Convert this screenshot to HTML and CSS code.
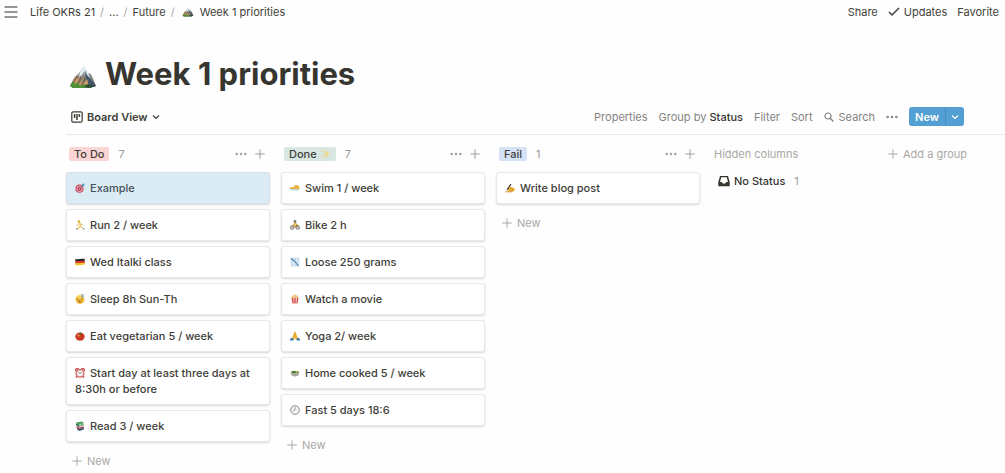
FILE: index.html
```html
<!DOCTYPE html>
<html lang="en">
<head>
<meta charset="utf-8">
<title>Week 1 priorities</title>
<link rel="stylesheet" href="styles.css">
</head>
<body>
<svg class="sprite" aria-hidden="true">
  <defs>
    <linearGradient id="rock" x1="0" y1="0" x2="0" y2="1"><stop offset="0" stop-color="#c5d9e5"/><stop offset=".45" stop-color="#8a8987"/><stop offset="1" stop-color="#4c5840"/></linearGradient>
    <linearGradient id="face" x1="0" y1="0" x2="0" y2="1"><stop offset="0" stop-color="#ffe16a"/><stop offset="1" stop-color="#eca01e"/></linearGradient>
  </defs>
  <symbol id="mountain" viewBox="0 0 28 24">
    <path d="M1 21 5 13 9 9 15 1 19 8 22 9 27 21 20 23H4z" fill="url(#rock)"/>
    <path d="m15 1-4 6-1 5 3-2 2-4 2 4 4 3-2-5z" fill="#e1eef4"/>
    <path d="m16 5 2 5 5 6 4 5-6 2-4-8z" fill="#40566a"/>
    <path d="m4 15 5-6-1 6 4-4-2 8 5-7-1 7 4-5 2 7-16 1z" fill="#c99c6a"/>
    <path d="m8 11-4 8m8-7-4 8m8-7-4 8" stroke="#5c493b" stroke-width="1" fill="none"/>
    <path d="m1 21 3-5 2 3 3-2 2 4 4-2 5 3-6 1H5z" fill="#4f9135"/>
    <path d="m15 21 4-2 7 2-6 2z" fill="#315137"/>
  </symbol>
  <symbol id="menu" viewBox="0 0 14 12"><path d="M.5 1h13M.5 6h13M.5 11h13" stroke="#777570" stroke-width="1.400"/></symbol>
  <symbol id="check" viewBox="0 0 12 10"><path d="m1 5 3 3 7-7" fill="none" stroke="currentColor" stroke-width="1.500"/></symbol>
  <symbol id="boardview" viewBox="0 0 12 12"><rect x=".8" y=".8" width="10.400" height="10.400" rx="1.500" fill="none" stroke="currentColor" stroke-width="1.200"/><path d="M3.600 3v4M6 3v6M8.400 3v3" stroke="currentColor" stroke-width="1.500"/></symbol>
  <symbol id="chevron" viewBox="0 0 8 8"><path d="m1 2.500 3 3 3-3" fill="none" stroke="currentColor" stroke-width="1.200"/></symbol>
  <symbol id="search" viewBox="0 0 10 10"><circle cx="4" cy="4" r="3" fill="none" stroke="currentColor" stroke-width="1.200"/><path d="m6.200 6.200 3.200 3.200" stroke="currentColor" stroke-width="1.400"/></symbol>
  <symbol id="dots" viewBox="0 0 12 12"><g fill="currentColor"><circle cx="1.700" cy="6" r="1.250"/><circle cx="6" cy="6" r="1.250"/><circle cx="10.300" cy="6" r="1.250"/></g></symbol>
  <symbol id="plus" viewBox="0 0 10 10"><path d="M5 .3v9.400M.3 5h9.400" stroke="currentColor" stroke-width="1"/></symbol>
  <symbol id="inbox" viewBox="0 0 12 12"><path fill-rule="evenodd" d="M2 1h8l1.700 6v4.200H.3V7zm1.200 1.300L2 7h2c0 2.300 4 2.300 4 0h2L8.800 2.300z" fill="currentColor"/></symbol>
  <symbol id="target" viewBox="0 0 10 10"><circle cx="4.500" cy="5.700" r="4.100" fill="#c4485a"/><circle cx="4.500" cy="5.700" r="3" fill="#f0cdd3"/><circle cx="4.500" cy="5.700" r="2.200" fill="#bf3950"/><circle cx="4.500" cy="5.700" r=".8" fill="#f8dce0"/><path d="m4.500 5.700 4-4" stroke="#4a5f70" stroke-width=".7"/><path d="M7 3 7.200 1.200 8.700 0l.2 1.200 1.100.2-1.200 1.400z" fill="#35a5c7"/></symbol>
  <symbol id="runner" viewBox="0 0 10 10"><circle cx="4" cy="1.500" r="1.200" fill="#dba62c"/><path d="m3.700 3 1.800 3-3 2.800" fill="none" stroke="#efc044" stroke-width="1.300"/><path d="m4 3.200 1.500 2.300" stroke="#eee3a0" stroke-width="1.800"/><path d="m5.500 6 2.700 2.700M5 3.700l2.500 1M3.500 3.500 2 5.500" fill="none" stroke="#d8a03a"/><path d="M1 9h2M8 9h1.500" stroke="#6e7891"/></symbol>
  <symbol id="flag" viewBox="0 0 10 10"><path d="M.3 2c3 1 6-1 9.400 0v2.500H.3z" fill="#26211f"/><path d="M.3 4c3 1 6-1 9.400 0v2.300c-3-1-6 1-9.400 0z" fill="#d8302a"/><path d="M.3 6c3 1 6-1 9.400 0v2.100c-3-1-6 1-9.400 0z" fill="#f3c329"/></symbol>
  <symbol id="sleepy" viewBox="0 0 10 10"><circle cx="5" cy="5.300" r="4.500" fill="url(#face)"/><path d="m1.800 4.900 1.800.4m2.200 0 1.800-.4" stroke="#70502b" stroke-width=".7"/><ellipse cx="4.700" cy="7.300" rx="1.100" ry=".8" fill="#805126"/><path d="M6 .8h2.500L6.500 3H9" fill="none" stroke="#5388bd" stroke-width=".8"/></symbol>
  <symbol id="tomato" viewBox="0 0 10 10"><ellipse cx="5" cy="5.600" rx="4.700" ry="4.200" fill="#c93a20"/><ellipse cx="3.500" cy="4.500" rx="1.700" ry="1" fill="#ef765b"/><path d="m5 3-2-.5L4.700 2 5 .6l.7 1.300L8 2l-2 1 1 1z" fill="#4c782d"/></symbol>
  <symbol id="alarm" viewBox="0 0 10 10"><path d="M.8 3C0 1 2 0 3.500 1M9.200 3C10 1 8 0 6.500 1M2 8 1 9.700M8 8l1 1.700" fill="none" stroke="#c9514c" stroke-width="1.400"/><circle cx="5" cy="5.300" r="3.900" fill="#f3efec" stroke="#cb5c58" stroke-width="1.200"/><path d="M3 3.700 5 5.600l2-1.500" fill="none" stroke="#555" stroke-width=".6"/></symbol>
  <symbol id="books" viewBox="0 0 10 10"><path d="m1 1.500 6-1 2 1.500-5 1.800z" fill="#49a361"/><path d="m1 2 3 1.800V6L1 4z" fill="#276c42"/><path d="m4 3.800 5-1.600v2L4 6z" fill="#83b98b"/><path d="m1.500 5 3 1.500 4-1.500v1.800l-4 1.400-3-1.200z" fill="#b83f58"/><path d="m2 7 2.500 1.200L9 6.500v1.800L4.500 9.900 2 8.500z" fill="#35506d"/></symbol>
  <symbol id="sparkles" viewBox="0 0 10 10"><path d="m5.800.8 1 3.200 3 1.200-3 1.100-1 3.200-1-3.200-3-1.100 3-1.200zM2 0l.5 1.500L4 2l-1.500.5L2 4l-.5-1.500L0 2l1.500-.5zm0 6.500.5 1.200 1.200.5-1.200.5L2 10l-.5-1.300-1.200-.5 1.200-.5z" fill="#f0d685"/></symbol>
  <symbol id="swim" viewBox="0 0 10 10"><path d="M0 5.700c2-1 3 .8 5 0s3-.5 5 0c-1 2-3 2-5 2s-4 0-5-2z" fill="#c5e2e9"/><path d="m0 5 3.500.2L5.500 3l3 .3" fill="none" stroke="#e4a330" stroke-width="1.400"/><circle cx="7.800" cy="4.700" r="1.700" fill="#efb32d"/><path d="m3 5.500 3-1 1 1.500H3z" fill="#e2a038"/></symbol>
  <symbol id="bike" viewBox="0 0 10 10"><g fill="#ddd" stroke="#777"><circle cx="2.200" cy="7.500" r="1.800"/><circle cx="7.800" cy="7.500" r="1.800"/><path d="m2.200 7.500 2-3 1.300 3 1.500-3 1 3" fill="none" stroke="#8d7445"/></g><circle cx="5" cy="1.500" r="1.400" fill="#777b73"/><path d="M5 3 3.500 5.200l2 1.200M5.200 3.200l2 1.700" fill="none" stroke="#dfaa3e" stroke-width="1.400"/></symbol>
  <symbol id="chart" viewBox="0 0 10 10"><path d="M.7.500h8.600v9H.7z" fill="#c9dced"/><path d="M.7 3.500h8.600M.7 6.500h8.600M3.500.5v9M6.500.5v9" stroke="#eaf2f8" stroke-width=".5"/><path d="m1 1.500 2.500 2 1 .2 2 3L8.500 9" fill="none" stroke="#427fae" stroke-width="1.100"/></symbol>
  <symbol id="popcorn" viewBox="0 0 10 10"><path d="M1.500 3.500h7L7.600 9.500H2.400z" fill="#f4dedb"/><path d="M1.500 3.500h1.700l.5 6H2.400zM4.300 3.500h1.400v6H4.400zM7 3.500h1.500l-.9 6H6.500z" fill="#d84b48"/><g fill="#eec87b"><circle cx="3" cy="2.700" r="1.300"/><circle cx="5" cy="1.800" r="1.400"/><circle cx="7" cy="2.700" r="1.300"/></g></symbol>
  <symbol id="pray" viewBox="0 0 10 10"><path d="M5 .3C4 1 3.700 4 2.500 6L2 8l2.500.5L5 6l.5 2.500L8 8l-.5-2C6.300 4 6 1 5 .3z" fill="#f2b534"/><path d="M5 1v6" stroke="#c9842a" stroke-width=".5"/><path d="m0 8 2-1.500 2 2L3 9.500H0zm10 0L8 6.500l-2 2 1 1h3z" fill="#437eaf"/></symbol>
  <symbol id="bowl" viewBox="0 0 10 10"><path d="M.5 4.500h9C9 7.500 7 8.500 5 8.500S1 7.500.5 4.500z" fill="#a6a89f"/><ellipse cx="5" cy="4.300" rx="4.500" ry="1.800" fill="#d6d9cd"/><ellipse cx="5" cy="4.200" rx="3.700" ry="1.300" fill="#52813c"/><circle cx="6.500" cy="3.900" r="1" fill="#e1b054"/><circle cx="3.500" cy="4" r=".7" fill="#38612c"/></symbol>
  <symbol id="clock" viewBox="0 0 10 10"><circle cx="5" cy="5" r="4.400" fill="#e2e2e3" stroke="#96979a" stroke-width="1"/><circle cx="5" cy="5" r="3.200" fill="#f4f4f4"/><path d="M5 2v3L3 6" fill="none" stroke="#666" stroke-width=".6"/></symbol>
  <symbol id="writing" viewBox="0 0 10 10"><path d="m2 7 1.500-2.500 2-1 .8.800 3 .7.700 2L8 8.500H4z" fill="#f0b335"/><path d="M5 5.500h3M5.500 7H9" stroke="#c68424" stroke-width=".6"/><path d="m2 7 4-6" stroke="#4a4743" stroke-width="1.300"/><path d="M.3 8.800h7.500" stroke="#c8841e" stroke-width=".9"/></symbol>
</svg>

<header class="topbar">
  <button class="icon-button" aria-label="Open menu"><svg class="icon-menu"><use href="#menu"/></svg></button>
  <nav class="breadcrumbs" aria-label="Breadcrumb">
    <a href="#">Life OKRs 21</a><span class="slash">/</span><a href="#">...</a><span class="slash">/</span><a href="#">Future</a><span class="slash">/</span><a href="#" class="current"><svg class="crumb-icon"><use href="#mountain"/></svg>Week 1 priorities</a>
  </nav>
  <div class="actions">
    <button>Share</button>
    <button class="updates"><svg class="icon-check"><use href="#check"/></svg>Updates</button>
    <button>Favorite</button>
  </div>
</header>

<main class="page">
  <h1 class="title"><svg class="title-icon"><use href="#mountain"/></svg>Week 1 priorities</h1>

  <div class="toolbar">
    <button class="view"><svg class="icon"><use href="#boardview"/></svg>Board View<svg class="icon-small"><use href="#chevron"/></svg></button>
    <div class="tools">
      <button>Properties</button>
      <button>Group by <span class="strong">Status</span></button>
      <button>Filter</button>
      <button>Sort</button>
      <button class="search"><svg class="icon-plus"><use href="#search"/></svg>Search</button>
      <button class="icon-button" aria-label="More options"><svg class="icon"><use href="#dots"/></svg></button>
      <div class="new-group"><button class="new-main">New</button><button class="new-more" aria-label="New options"><svg class="icon-small"><use href="#chevron"/></svg></button></div>
    </div>
  </div>

  <div class="board">
    <section class="column">
      <header class="column-head"><h2 class="tag red">To Do</h2><span class="count">7</span><span class="column-tools"><button class="icon-button" aria-label="To Do options"><svg class="icon"><use href="#dots"/></svg></button><button class="icon-button" aria-label="Add to To Do"><svg class="icon-plus"><use href="#plus"/></svg></button></span></header>
      <a href="#" class="card selected"><svg class="emoji"><use href="#target"/></svg>Example</a>
      <a href="#" class="card"><svg class="emoji"><use href="#runner"/></svg>Run 2 / week</a>
      <a href="#" class="card"><svg class="emoji"><use href="#flag"/></svg>Wed Italki class</a>
      <a href="#" class="card"><svg class="emoji"><use href="#sleepy"/></svg>Sleep 8h Sun-Th</a>
      <a href="#" class="card"><svg class="emoji"><use href="#tomato"/></svg>Eat vegetarian 5 / week</a>
      <a href="#" class="card"><svg class="emoji"><use href="#alarm"/></svg>Start day at least three days at 8:30h or before</a>
      <a href="#" class="card"><svg class="emoji"><use href="#books"/></svg>Read 3 / week</a>
      <button class="add"><svg class="icon-plus"><use href="#plus"/></svg>New</button>
    </section>

    <section class="column">
      <header class="column-head"><h2 class="tag green">Done <svg class="spark"><use href="#sparkles"/></svg></h2><span class="count">7</span><span class="column-tools"><button class="icon-button" aria-label="Done options"><svg class="icon"><use href="#dots"/></svg></button><button class="icon-button" aria-label="Add to Done"><svg class="icon-plus"><use href="#plus"/></svg></button></span></header>
      <a href="#" class="card"><svg class="emoji"><use href="#swim"/></svg>Swim 1 / week</a>
      <a href="#" class="card"><svg class="emoji"><use href="#bike"/></svg>Bike 2 h</a>
      <a href="#" class="card"><svg class="emoji"><use href="#chart"/></svg>Loose 250 grams</a>
      <a href="#" class="card"><svg class="emoji"><use href="#popcorn"/></svg>Watch a movie</a>
      <a href="#" class="card"><svg class="emoji"><use href="#pray"/></svg>Yoga 2/ week</a>
      <a href="#" class="card"><svg class="emoji"><use href="#bowl"/></svg>Home cooked 5 / week</a>
      <a href="#" class="card"><svg class="emoji"><use href="#clock"/></svg>Fast 5 days 18:6</a>
      <button class="add"><svg class="icon-plus"><use href="#plus"/></svg>New</button>
    </section>

    <section class="column">
      <header class="column-head"><h2 class="tag blue">Fail</h2><span class="count">1</span><span class="column-tools"><button class="icon-button" aria-label="Fail options"><svg class="icon"><use href="#dots"/></svg></button><button class="icon-button" aria-label="Add to Fail"><svg class="icon-plus"><use href="#plus"/></svg></button></span></header>
      <a href="#" class="card"><svg class="emoji"><use href="#writing"/></svg>Write blog post</a>
      <button class="add"><svg class="icon-plus"><use href="#plus"/></svg>New</button>
    </section>

    <section class="hidden-columns">
      <header class="hidden-head"><h2>Hidden columns</h2><button class="add-group"><svg class="icon-plus"><use href="#plus"/></svg>Add a group</button></header>
      <a href="#" class="no-status"><svg class="icon"><use href="#inbox"/></svg>No Status<span class="count">1</span></a>
    </section>
  </div>
</main>
</body>
</html>
```

FILE: styles.css
```css
* { box-sizing: border-box; }

body {
  margin: 0;
  background: #fefefe;
  color: #403e39;
  font: 11px/16px Inter, "Liberation Sans", sans-serif;
}

button {
  display: inline-flex;
  align-items: center;
  padding: 0;
  border: 0;
  background: none;
  color: inherit;
  font: inherit;
  white-space: pre;
  cursor: pointer;
}

a { color: inherit; text-decoration: none; }
h1, h2 { margin: 0; font: inherit; }
svg { flex: none; }

.sprite { display: block; width: 0; height: 0; }
.icon { width: 12px; height: 12px; }
.icon-plus { width: 10px; height: 10px; }
.icon-small { width: 8px; height: 8px; }
.icon-menu { width: 14px; height: 12px; }
.icon-check { width: 12px; height: 10px; }

.topbar {
  display: flex;
  align-items: center;
  height: 24px;
  padding: 0 6px 0 4px;
}
.breadcrumbs {
  display: flex;
  align-items: center;
  gap: 5px;
  margin-left: 12px;
}
.slash { color: #aaa8a4; }
.current { display: flex; align-items: center; gap: 6px; }
.crumb-icon { width: 12px; height: 10px; margin-left: 2px; }
.actions { display: flex; gap: 10px; margin-left: auto; }
.updates { gap: 4px; }

.page { padding-left: 66px; }
.title {
  display: flex;
  align-items: center;
  gap: 8px;
  padding: 30px 0 5px 3px;
  color: #373530;
  font-size: 31px;
  line-height: 40px;
  font-weight: 700;
}
.title-icon { width: 28px; height: 24px; margin-top: 6px; }

.toolbar {
  display: flex;
  align-items: center;
  justify-content: space-between;
  height: 36px;
  padding: 0 41px 0 5px;
  border-bottom: 1px solid #e8e8e7;
}
.view { gap: 4px; font-weight: 600; }
.tools { display: flex; align-items: center; gap: 11px; color: #85837f; }
.strong { color: #373530; font-weight: 500; }
.search { gap: 5px; }
.new-group {
  display: flex;
  overflow: hidden;
  border-radius: 3px;
  background: #529fd3;
  color: #fff;
}
.new-main { height: 19px; padding: 0 6px; font-weight: 600; }
.new-more { width: 19px; justify-content: center; border-left: 1px solid #438dbf; }

.board { display: flex; align-items: flex-start; gap: 11px; }
.column {
  display: flex;
  flex: 0 0 204px;
  flex-direction: column;
  gap: 5px;
}
.column-head { display: flex; align-items: center; height: 32px; padding: 6px 5px 0 3px; }
.tag {
  display: flex;
  align-items: center;
  gap: 4px;
  height: 14px;
  padding: 0 5px;
  border-radius: 2px;
  font-weight: 500;
}
.red { background: #fbd5d4; }
.green { background: #d8e7e1; }
.blue { background: #d5e2f6; }
.spark { width: 10px; height: 10px; }
.count { margin-left: 9px; color: #9b9995; }
.column-tools { display: flex; gap: 8px; margin-left: auto; color: #a09e9a; }

.card {
  display: block;
  padding: 7px 8px;
  border: 1px solid #e8e8e7;
  border-radius: 3px;
  background: #fff;
  box-shadow: 0 1px 2px #d8d8d7;
  font-weight: 500;
}
.selected { border-color: #d3e2ea; background: #dcecf5; color: #45525a; }
.emoji { width: 10px; height: 10px; margin-right: 5px; vertical-align: -1px; }
.add { gap: 5px; height: 28px; padding: 0 6px; color: #aaa8a5; }

.hidden-columns { flex: 1; padding: 0 38px 0 3px; color: #aaa8a5; }
.hidden-head { display: flex; align-items: center; justify-content: space-between; height: 32px; padding-top: 6px; }
.add-group { gap: 5px; }
.no-status {
  display: flex;
  align-items: center;
  gap: 4px;
  margin-top: 6px;
  padding-left: 4px;
  color: #373530;
  font-weight: 500;
}
.no-status .count { margin-left: 5px; font-weight: 400; }
```
